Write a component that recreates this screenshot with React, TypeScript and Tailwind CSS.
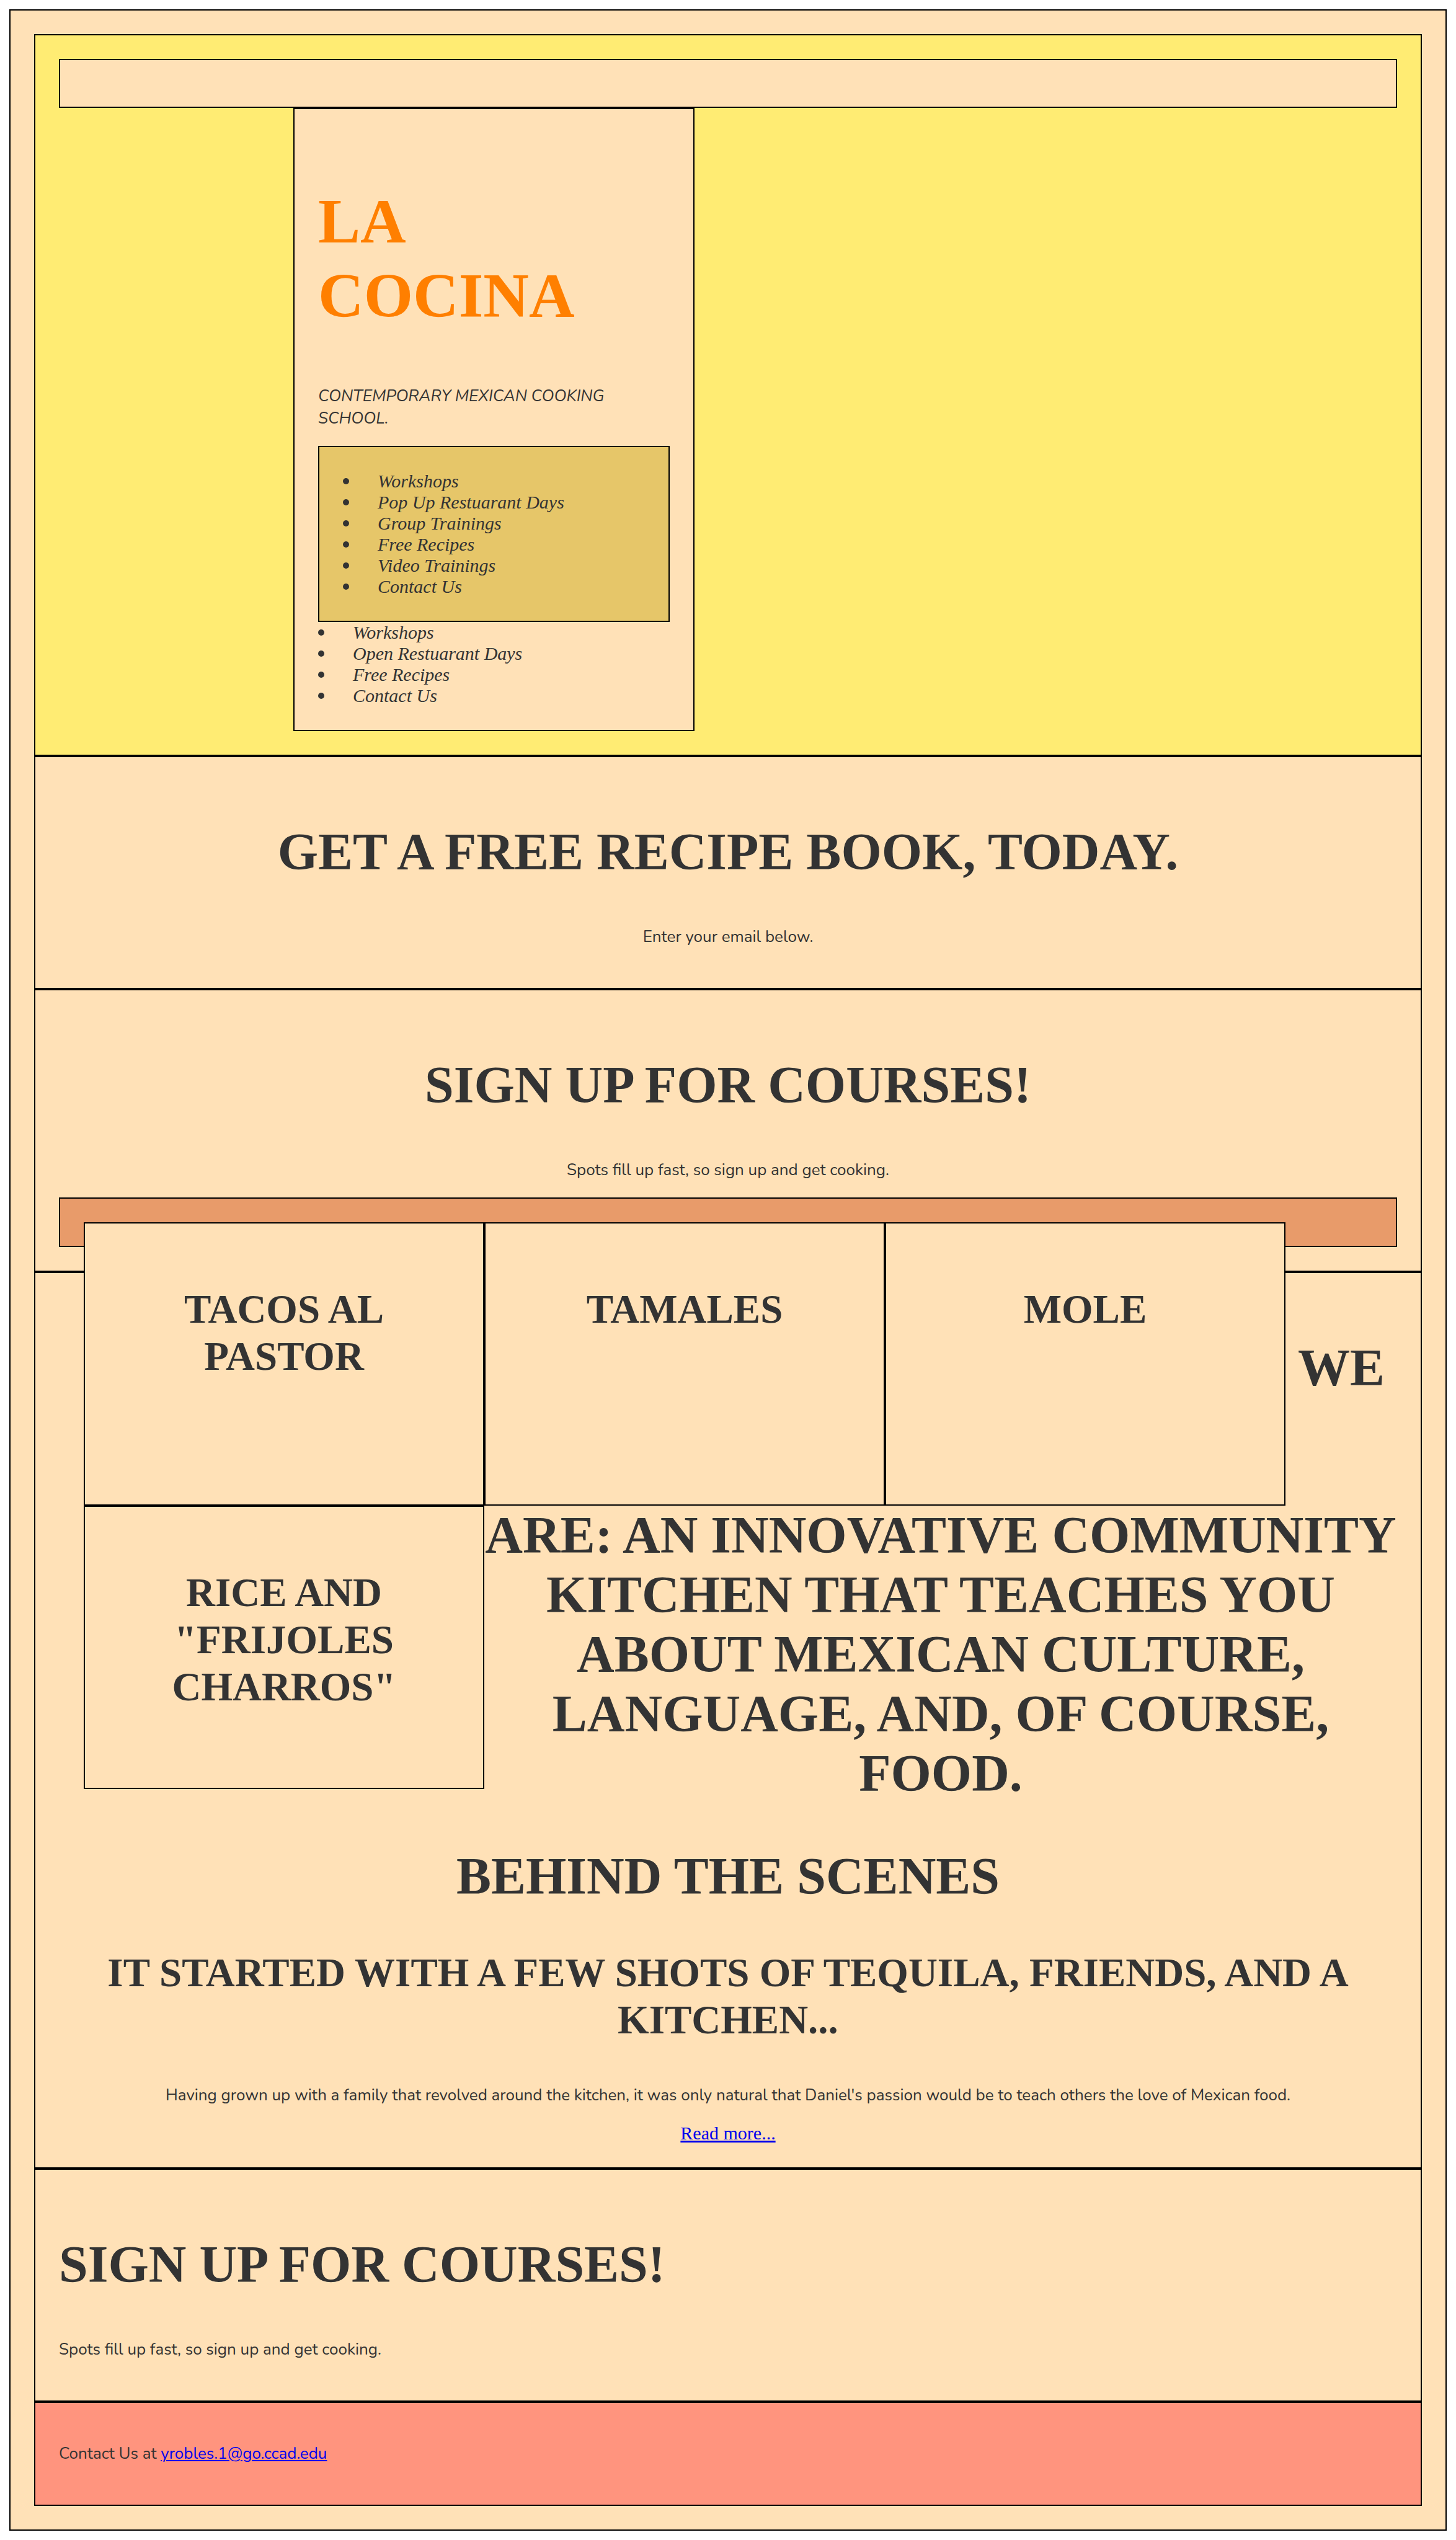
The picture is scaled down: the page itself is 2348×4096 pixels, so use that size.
import type { ReactNode } from "react";

const dishes = ["Tacos al Pastor", "Tamales", "Mole", 'Rice and "Frijoles Charros"'];

const menuLinks = [
  "Workshops",
  "Pop Up Restuarant Days",
  "Group Trainings",
  "Free Recipes",
  "Video Trainings",
  "Contact Us",
];

const quickLinks = ["Workshops", "Open Restuarant Days", "Free Recipes", "Contact Us"];

function Heading({ children, className = "mt-[67px] mb-[71px]" }: { children: ReactNode; className?: string }) {
  return <h1 className={`text-[84px] leading-[96px] font-bold uppercase ${className}`}>{children}</h1>;
}

function Copy({ children }: { children: ReactNode }) {
  return <p className="mb-[26px] font-['Nunito','Noto_Sans',sans-serif] text-[26px] leading-[36px]">{children}</p>;
}

function Section({ children, className }: { children: ReactNode; className: string }) {
  return <section className={`border-2 border-black p-[38px] ${className}`}>{children}</section>;
}

function LinkList({ items }: { items: string[] }) {
  return (
    <ul className="text-[30px] leading-[34px] italic">
      {items.map((item) => (
        <li key={item} className="flex items-center gap-[46px]">
          <span className="size-[10px] rounded-full bg-[#333]" />
          {item}
        </li>
      ))}
    </ul>
  );
}

export default function App() {
  return (
    <div className="bg-white p-[15px] font-['Liberation_Serif',serif] text-[30px] leading-[34px] text-[#333]">
      <div className="border-2 border-black bg-[#ffe1b7] p-[38px]">
        <header className="border-2 border-black bg-[#ffec73] p-[38px]">
          <div className="h-[79px] border-2 border-black bg-[#ffe1b7]" />
          <div className="ml-[378px] w-[30%] border-2 border-black bg-[#ffe1b7] p-[38px]">
            <h1 className="mt-[83px] mb-[84px] text-[102px] leading-[120px] font-bold text-[#ff7f00] uppercase">
              La Cocina
            </h1>
            <div className="uppercase italic">
              <Copy>Contemporary Mexican cooking school.</Copy>
            </div>
            <nav className="border-2 border-black bg-[#e6c669] p-[38px]">
              <LinkList items={menuLinks} />
            </nav>
            <LinkList items={quickLinks} />
          </div>
        </header>

        <Section className="text-center">
          <Heading>Get a free recipe book, today.</Heading>
          <Copy>Enter your email below.</Copy>
        </Section>

        <Section className="text-center">
          <Heading>Sign up for courses!</Heading>
          <Copy>Spots fill up fast, so sign up and get cooking.</Copy>
          {/* The dish cards float out of this bar and into the section below it. */}
          <div className="h-[79px] border-2 border-black bg-[#e89b6a] p-[38px]">
            {dishes.map((dish) => (
              <div
                key={dish}
                className="float-left h-[457px] w-[646px] border-2 border-black bg-[#ffe1b7] p-[38px]"
              >
                <h2 className="mt-[62px] text-[65px] leading-[76px] font-bold uppercase">{dish}</h2>
              </div>
            ))}
          </div>
        </Section>

        <Section className="text-center">
          <Heading className="mt-[67px] mb-[70px]">
            We are: an innovative community kitchen that teaches you about Mexican culture, language, and, of
            course, food.
          </Heading>
          <Heading className="mb-[69px]">Behind the scenes</Heading>
          <h2 className="mb-[66px] text-[65px] leading-[76px] font-bold uppercase">
            It started with a few shots of tequila, friends, and a kitchen...
          </h2>
          <Copy>
            Having grown up with a family that revolved around the kitchen, it was only natural that Daniel's
            passion would be to teach others the love of Mexican food.
          </Copy>
          <a href="#story" className="text-[#0000ee] underline">
            Read more...
          </a>
        </Section>

        <Section className="text-left">
          <Heading>Sign up for courses!</Heading>
          <Copy>Spots fill up fast, so sign up and get cooking.</Copy>
        </Section>

        <footer className="border-2 border-black bg-[#ff947e] px-[38px] pt-[64px] pb-[38px]">
          <Copy>
            Contact Us at{" "}
            <a href="mailto:yrobles.1@go.ccad.edu" className="text-[#0000ee] underline">
              yrobles.1@go.ccad.edu
            </a>
          </Copy>
        </footer>
      </div>
    </div>
  );
}
